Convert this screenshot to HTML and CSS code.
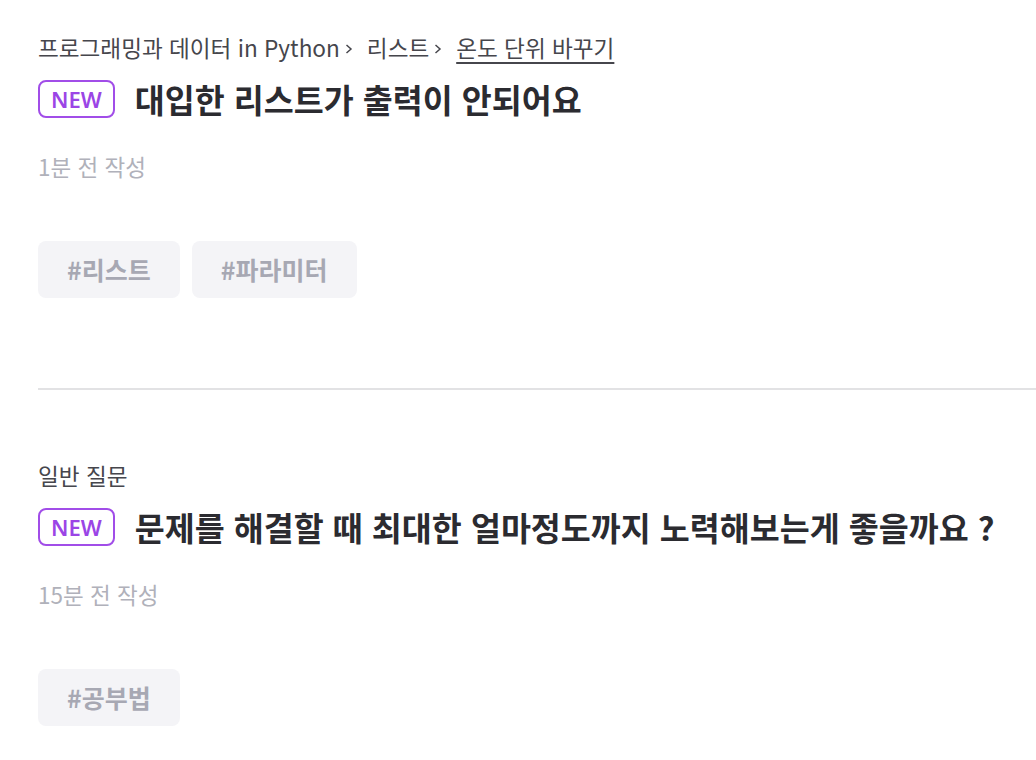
FILE: index.html
```html
<!DOCTYPE html>
<html lang="ko">
<head>
    <meta charset="UTF-8">
    <meta name="viewport" content="width=device-width, initial-scale=1.0">
    <title>질문 목록</title>
    <link rel="stylesheet" href="styles.css">
</head>
<body>
<div class="post-list">
    <div class="post">
        <div class="crumbs">
            <span>프로그래밍과 데이터 in Python</span>
            <svg class="chev" width="8" height="10" viewBox="0 0 8 10"><path d="M1.5 1 L6 5 L1.5 9" fill="none" stroke="#46464c" stroke-width="1.5"/></svg>
            <span>리스트</span>
            <svg class="chev" width="8" height="10" viewBox="0 0 8 10"><path d="M1.5 1 L6 5 L1.5 9" fill="none" stroke="#46464c" stroke-width="1.5"/></svg>
            <a href="#" class="crumb-link">온도 단위 바꾸기</a>
        </div>
        <div class="title-row">
            <span class="badge">NEW</span>
            <h2 class="title">대입한 리스트가 출력이 안되어요</h2>
        </div>
        <div class="meta">1분 전 작성</div>
        <div class="tags">
            <span class="tag">#리스트</span>
            <span class="tag">#파라미터</span>
        </div>
    </div>
    <div class="post">
        <div class="crumbs">
            <span>일반 질문</span>
        </div>
        <div class="title-row">
            <span class="badge">NEW</span>
            <h2 class="title">문제를 해결할 때 최대한 얼마정도까지 노력해보는게 좋을까요 ?</h2>
        </div>
        <div class="meta">15분 전 작성</div>
        <div class="tags">
            <span class="tag">#공부법</span>
        </div>
    </div>
</div>
</body>
</html>
```

FILE: styles.css
```css
body {
    font-family: "Noto Sans CJK KR", "Noto Sans", sans-serif;
    background-color: #fff;
    color: #333;
    margin: 0;
    overflow: hidden;
}
.post-list {
    padding-left: 38px;
}
.post {
    padding: 74px 0 90px;
    border-bottom: 2px solid #e2e2e4;
}
.post:first-child {
    padding-top: 36px;
}
.crumbs {
    display: flex;
    align-items: center;
    font-size: 22.6px;
    line-height: 24px;
    color: #46464c;
}
.chev {
    margin: 1px 14px 0 5px;
}
.crumb-link {
    color: #46464c;
    text-decoration: underline;
    text-decoration-thickness: 1.5px;
    text-underline-offset: 5px;
}
.title-row {
    display: flex;
    align-items: center;
    gap: 20px;
    margin-top: 20px;
    height: 38px;
}
.badge {
    box-sizing: border-box;
    height: 38px;
    padding: 0 11px;
    border: 2px solid #a14de8;
    border-radius: 8px;
    color: #9b45e6;
    font-family: "Noto Sans", sans-serif;
    font-size: 22px;
    font-weight: 600;
    line-height: 34px;
}
.title {
    margin: 0;
    font-size: 32.6px;
    font-weight: 700;
    color: #2b2b30;
    line-height: 38px;
}
.meta {
    margin-top: 36px;
    font-size: 22.5px;
    line-height: 24px;
    color: #b0b1ba;
}
.tags {
    display: flex;
    gap: 12px;
    margin-top: 63px;
}
.tag {
    height: 57px;
    padding: 0 29px;
    border-radius: 8px;
    background-color: #f4f4f7;
    color: #a7a8b3;
    font-size: 25px;
    font-weight: 700;
    line-height: 57px;
}
```
